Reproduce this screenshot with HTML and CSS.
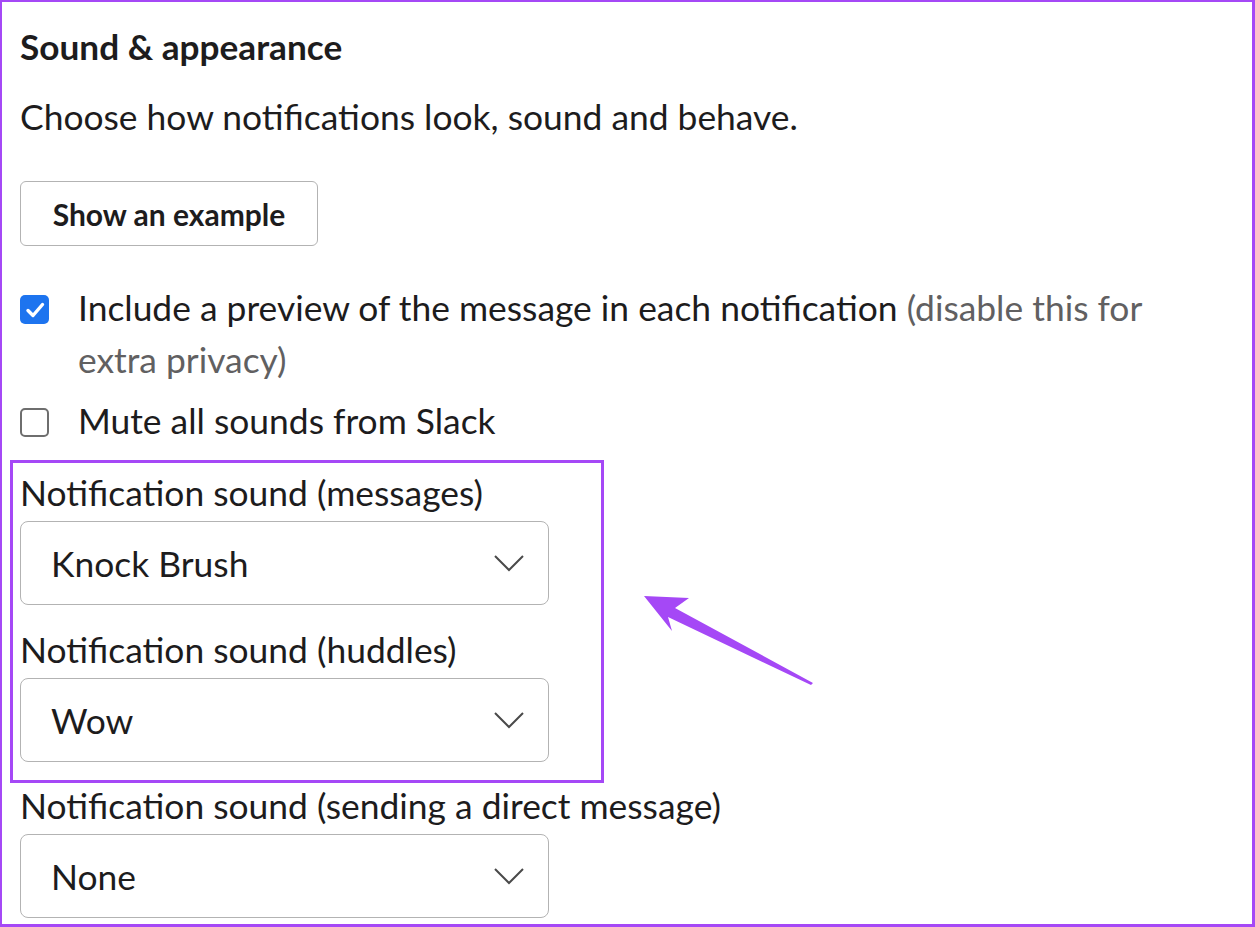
FILE: index.html
```html
<!DOCTYPE html>
<html lang="en">
<head>
<meta charset="utf-8">
<title>Sound &amp; appearance</title>
<link rel="stylesheet" href="styles.css">
</head>
<body>
<div class="page">
  <h2 class="title">Sound &amp; appearance</h2>
  <p class="desc">Choose how notifications look, sound and behave.</p>
  <button class="btn">Show an example</button>

  <label class="check check-first">
    <span class="box box-on">
      <svg viewBox="0 0 28 28" width="28" height="28"><path d="M7 14.5 L12 19.5 L21.5 8.5" fill="none" stroke="#fff" stroke-width="3.4" stroke-linecap="round" stroke-linejoin="round"/></svg>
    </span>
    <span class="check-text">Include a preview of the message in each notification <span class="muted">(disable this for extra privacy)</span></span>
  </label>

  <label class="check check-second">
    <span class="box box-off"></span>
    <span class="check-text">Mute all sounds from Slack</span>
  </label>

  <div class="highlight">
    <div class="field-label">Notification sound (messages)</div>
    <div class="select">
      <span>Knock Brush</span>
      <svg class="chev" viewBox="0 0 32 18" width="32" height="18"><path d="M2 2 L16 16 L30 2" fill="none" stroke="#4a4a4a" stroke-width="2"/></svg>
    </div>
    <div class="field-label field-gap">Notification sound (huddles)</div>
    <div class="select">
      <span>Wow</span>
      <svg class="chev" viewBox="0 0 32 18" width="32" height="18"><path d="M2 2 L16 16 L30 2" fill="none" stroke="#4a4a4a" stroke-width="2"/></svg>
    </div>
  </div>

  <div class="field-label field-after">Notification sound (sending a direct message)</div>
  <div class="select">
    <span>None</span>
    <svg class="chev" viewBox="0 0 32 18" width="32" height="18"><path d="M2 2 L16 16 L30 2" fill="none" stroke="#4a4a4a" stroke-width="2"/></svg>
  </div>

  <svg class="arrow" viewBox="0 0 1255 927" width="1255" height="927">
    <polygon points="644,596 689,598 675,608 813,683 811,685 668,617 672,631" fill="#a548f6"/>
  </svg>
</div>
</body>
</html>
```

FILE: styles.css
```css
* { box-sizing: border-box; }
html, body { margin: 0; padding: 0; background: #fff; }
body {
  font-family: Lato, "Open Sans", "Liberation Sans", sans-serif;
  color: #1d1c1d;
}
.page {
  position: relative;
  width: 1255px;
  height: 927px;
  border-style: solid;
  border-color: #a548f6;
  border-width: 2px 3px 3px 2px;
  padding: 0 0 0 18px;
  overflow: hidden;
}
.title {
  margin: 24px 0 0;
  font-size: 35.2px;
  line-height: 40px;
  font-weight: 700;
}
.desc {
  margin: 31px 0 0;
  font-size: 35.4px;
  line-height: 40px;
}
.btn {
  display: block;
  margin-top: 44px;
  width: 298px;
  height: 65px;
  padding: 0;
  background: #fff;
  border: 1.5px solid #b3b3b3;
  border-radius: 6px;
  font-family: inherit;
  font-size: 30px;
  font-weight: 700;
  color: #1d1c1d;
}
.check {
  display: flex;
  align-items: flex-start;
  font-size: 35.4px;
  line-height: 52px;
  width: 1140px;
}
.check-first { margin-top: 36px; }
.check-second { margin-top: 9px; }
.box {
  flex: none;
  width: 29px;
  height: 29px;
  margin-top: 13px;
  margin-right: 29px;
  border-radius: 5px;
  display: flex;
  align-items: center;
  justify-content: center;
}
.box-on { background: #1d74ef; }
.box-off { border: 2px solid #6e6e6e; }
.muted { color: #616061; }
.highlight {
  margin: 13px 0 0 -10px;
  width: 594px;
  border: 3px solid #a548f6;
  padding: 10px 0 18px 7px;
}
.field-label {
  font-size: 35.4px;
  line-height: 40px;
}
.field-gap { margin-top: 25px; }
.field-after { margin-top: 3px; }
.select {
  margin-top: 8px;
  width: 529px;
  height: 84px;
  border: 1.5px solid #b3b3b3;
  border-radius: 8px;
  padding: 0 23px 0 30px;
  display: flex;
  align-items: center;
  justify-content: space-between;
  font-size: 35.4px;
}
.chev { display: block; }
.arrow {
  position: absolute;
  left: -2px;
  top: -2px;
  pointer-events: none;
}
```
